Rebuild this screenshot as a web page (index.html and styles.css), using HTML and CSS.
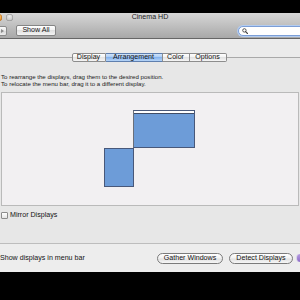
FILE: index.html
```html
<!DOCTYPE html>
<html>
<head>
<meta charset="utf-8">
<link rel="stylesheet" href="styles.css">
</head>
<body>
<div class="window">
  <header class="titlebar">
    <div class="title-row">
      <div class="lights"><span class="light close"></span><span class="light min"></span></div>
      <div class="title">Cinema HD</div>
      <div></div>
    </div>
    <div class="toolbar">
      <div class="nav"><span class="fwd"></span></div>
      <button class="btn showall">Show All</button>
      <div class="search">
        <svg class="mag" width="6" height="6" viewBox="0 0 6 6"><circle cx="2.4" cy="2.4" r="1.7" fill="none" stroke="#444" stroke-width="0.9"/><line x1="3.6" y1="3.6" x2="5.5" y2="5.5" stroke="#444" stroke-width="1.1" stroke-linecap="round"/></svg>
      </div>
    </div>
  </header>
  <main class="content">
    <section class="tabbox">
      <nav class="tabs">
        <div class="tab t-display">Display</div>
        <div class="tab t-arr active">Arrangement</div>
        <div class="tab t-color">Color</div>
        <div class="tab t-options">Options</div>
      </nav>
      <p class="hint">To rearrange the displays, drag them to the desired position.<br>To relocate the menu bar, drag it to a different display.</p>
      <div class="arrange">
        <div class="display primary" style="left:131px;top:17px;width:62px;height:38px"><div class="menubar"></div></div>
        <div class="display" style="left:102px;top:55px;width:30px;height:39px"></div>
      </div>
      <label class="check"><span class="box"></span>Mirror Displays</label>
    </section>
  </main>
  <footer class="bottombar">
    <span class="menu-label">Show displays in menu bar</span>
    <div class="actions">
      <button class="btn pill gather">Gather Windows</button>
      <button class="btn pill detect">Detect Displays</button>
      <span class="help" title="Help"></span>
    </div>
  </footer>
</div>
</body>
</html>
```
FILE: styles.css
```css
* { box-sizing: border-box; }
html, body { margin: 0; padding: 0; }
body {
  background: #000;
  width: 300px;
  height: 300px;
  overflow: hidden;
  font-family: "Liberation Sans", Arial, sans-serif;
  color: #141414;
}
.window {
  margin-top: 13px;
  height: 259px;
  display: flex;
  flex-direction: column;
  background: #ebebeb;
}
.titlebar {
  height: 26px;
  border-bottom: 1px solid #666;
  background: linear-gradient(#d7d7d7, #a8a8a8);
  display: flex;
  flex-direction: column;
}
.title-row {
  height: 9px;
  display: grid;
  grid-template-columns: 1fr auto 1fr;
  align-items: center;
}
.lights { display: flex; gap: 4px; margin-left: -5px; }
.light { width: 7px; height: 7px; border-radius: 50%; }
.light.close { background: radial-gradient(circle at 50% 35%, #ffd27a, #e27a10); box-shadow: inset 0 0 0 0.5px #b0600c; }
.light.min { background: radial-gradient(circle at 50% 35%, #eeeeee, #b3b3b3); box-shadow: inset 0 0 0 0.5px #8a8a8a; }
.title { font-size: 7.1px; line-height: 9px; color: #1b1b1b; }
.toolbar {
  flex: 1;
  display: flex;
  align-items: flex-start;
  padding-top: 3px;
}
.btn {
  font-family: inherit;
  color: #141414;
  padding: 0;
  margin: 0;
  text-align: center;
}
.nav {
  margin-top: 1px;
  margin-left: -9px;
  width: 16px;
  height: 10px;
  border: 1px solid #8b8b8b;
  border-radius: 2px;
  background: linear-gradient(#fafafa, #e6e6e6 50%, #d8d8d8 50%, #ececec);
  display: flex;
  align-items: center;
  justify-content: flex-end;
  padding-right: 2px;
}
.fwd {
  width: 0; height: 0;
  border-left: 3px solid #8a8a8a;
  border-top: 2.5px solid transparent;
  border-bottom: 2.5px solid transparent;
}
.showall {
  margin-left: 9px;
  width: 40px;
  height: 11px;
  font-size: 7.1px;
  line-height: 9px;
  border: 1px solid #858585;
  border-radius: 2px;
  background: linear-gradient(#ffffff, #f0f0f0 50%, #e0e0e0 50%, #f4f4f4);
}
.search {
  margin-left: auto;
  margin-right: -10px;
  margin-top: 1px;
  width: 72px;
  height: 10px;
  border-radius: 6px;
  border: 1px solid #7c9ed6;
  box-shadow: 0 0 0 1px #b3ccf0;
  background: #fff;
  display: flex;
  align-items: center;
  padding-left: 3px;
}
.mag { display: block; }
.content {
  height: 205px;
  padding-top: 18px;
  display: flex;
  flex-direction: column;
  background: #ebebeb;
}
.tabbox {
  flex: 1;
  border-top: 1px solid #a9a9a9;
  border-bottom: 1px solid #bdbdbd;
  background: #e7e7e7;
  display: flex;
  flex-direction: column;
}
.tabs {
  display: flex;
  justify-content: center;
  margin-top: -5px;
  margin-left: -2px;
}
.tab {
  height: 9px;
  font-size: 7.1px;
  line-height: 7px;
  text-align: center;
  border: 1px solid #8d8d8d;
  border-left: none;
  background: linear-gradient(#ffffff, #f1f1f1 50%, #e3e3e3 50%, #f5f5f5);
  color: #141414;
}
.tab:first-child { border-left: 1px solid #8d8d8d; border-radius: 2px 0 0 2px; }
.tab:last-child { border-radius: 0 2px 2px 0; }
.tab.active {
  background: linear-gradient(#cfe3fb, #a4c8f3 50%, #86b4ee 50%, #b6d4f7);
  border-top-color: #5f7fae;
  border-bottom-color: #5f7fae;
}
.t-display { width: 34px; }
.t-arr { width: 57px; }
.t-color { width: 27px; }
.t-options { width: 37px; }
.hint {
  margin: 11px 0 0 1px;
  font-size: 6.1px;
  line-height: 7px;
  color: #1a1a1a;
}
.arrange {
  position: relative;
  margin: 5px 1px 0 1px;
  height: 114px;
  border: 1px solid #bababa;
  background: #f2f0f2;
}
.display {
  position: absolute;
  border: 1px solid #48587a;
  background: #6d9cd8;
}
.display.primary { border-left-color: #6a6f7a; }
.menubar {
  height: 3px;
  background: #fff;
  border-bottom: 1px solid #3f4c66;
}
.check {
  display: flex;
  align-items: center;
  gap: 2px;
  margin: 6px 0 0 1px;
  height: 7px;
  font-size: 7.1px;
  line-height: 7px;
}
.box {
  width: 7px;
  height: 7px;
  border: 1px solid #8c8c8c;
  border-radius: 1px;
  background: linear-gradient(#ffffff, #e4e4e4);
}
.bottombar {
  height: 28px;
  display: flex;
  align-items: center;
  background: #ededed;
  font-size: 7.1px;
}
.menu-label { line-height: 9px; }
.actions {
  margin-left: auto;
  display: flex;
  align-items: center;
  gap: 6px;
}
.pill {
  height: 11px;
  border-radius: 6px;
  border: 1px solid #7b7b7b;
  background: linear-gradient(#ffffff, #f2f2f2 45%, #e2e2e2 55%, #f6f6f6);
  font-size: 7.1px;
  line-height: 9px;
}
.gather { width: 66px; }
.detect { width: 64px; }
.help {
  margin-left: -3px;
  margin-right: -8px;
  width: 12px;
  height: 8px;
  border-radius: 4px;
  border-left: 1px solid #d8d0ea;
  background: linear-gradient(#b59be0, #8d6cc8);
}
```
